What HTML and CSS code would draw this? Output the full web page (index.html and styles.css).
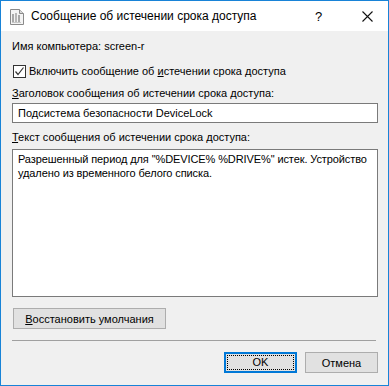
FILE: index.html
```html
<!DOCTYPE html>
<html lang="ru">
<head>
    <meta charset="UTF-8">
    <title>Сообщение об истечении срока доступа</title>
    <link rel="stylesheet" href="styles.css">
</head>
<body>
    <div class="window">
        <div class="titlebar">
            <svg class="app-icon" width="14" height="16" viewBox="0 0 14 16">
                <path d="M0.5 0.5 H9.5 L13.5 4.5 V15.5 H0.5 Z" fill="#f4f4f4" stroke="#8a8a8a"/>
                <path d="M9.5 0.5 V4.5 H13.5" fill="#d8d8d8" stroke="#8a8a8a"/>
                <rect x="2" y="5" width="2" height="8" fill="#a8a8a8"/>
                <rect x="5" y="4" width="2" height="9" fill="#b8b8b8"/>
                <rect x="8" y="6" width="2" height="7" fill="#a8a8a8"/>
                <rect x="2" y="13" width="9" height="1" fill="#c8c8c8"/>
            </svg>
            <span class="title">Сообщение об истечении срока доступа</span>
            <span class="help">?</span>
            <svg class="close" width="11" height="11" viewBox="0 0 11 11">
                <path d="M0.5 0.5 L10.5 10.5 M10.5 0.5 L0.5 10.5" stroke="#111" stroke-width="1.1"/>
            </svg>
        </div>
        <div class="content">
            <div class="line">Имя компьютера: screen-r</div>
            <label class="check-row">
                <span class="checkbox">
                    <svg width="11" height="11" viewBox="0 0 11 11">
                        <path d="M1.5 5.5 L4 8.5 L9.5 1.5" fill="none" stroke="#333" stroke-width="1.2"/>
                    </svg>
                </span>
                <span>Включить сообщение об <u>и</u>стечении срока доступа</span>
            </label>
            <div class="line label"><u>З</u>аголовок сообщения об истечении срока доступа:</div>
            <div class="field">Подсистема безопасности DeviceLock</div>
            <div class="line label"><u>Т</u>екст сообщения об истечении срока доступа:</div>
            <div class="memo">Разрешенный период для "%DEVICE% %DRIVE%" истек. Устройство удалено из временного белого списка.</div>
            <div class="restore-row">
                <button class="btn restore"><u>В</u>осстановить умолчания</button>
            </div>
            <div class="separator"></div>
            <div class="actions">
                <button class="btn default"><span class="focus">OK</span></button>
                <button class="btn">Отмена</button>
            </div>
        </div>
    </div>
</body>
</html>
```

FILE: styles.css
```css
body {
    margin: 0;
    font-family: "Liberation Sans", Arial, sans-serif;
    font-size: 11px;
    color: #000;
}

.window {
    width: 387px;
    height: 384px;
    border: 1px solid #1883d7;
    background: #f0f0f0;
    display: flex;
    flex-direction: column;
}

.titlebar {
    height: 30px;
    background: #fff;
    display: flex;
    align-items: center;
    padding-left: 9px;
}

.app-icon {
    margin-top: 1px;
}

.title {
    margin-left: 7px;
    font-size: 12px;
    flex: 1;
}

.help {
    width: 14px;
    margin-right: 33px;
    font-size: 13px;
}

.close {
    margin-right: 15px;
}

.content {
    padding: 7px 10px 0 11px;
    display: flex;
    flex-direction: column;
}

.line {
    height: 16px;
    line-height: 16px;
    white-space: nowrap;
}

.check-row {
    display: flex;
    align-items: center;
    gap: 3px;
    margin-top: 9px;
    margin-left: 1px;
    height: 16px;
}

.checkbox {
    width: 11px;
    height: 11px;
    border: 1px solid #333;
    background: #fff;
    display: flex;
}

.label {
    margin-top: 6px;
}

.field {
    margin-top: 2px;
    height: 18px;
    line-height: 18px;
    border: 1px solid #7a7a7a;
    background: #fff;
    padding-left: 5px;
}

.memo {
    margin-top: 4px;
    height: 139px;
    border: 1px solid #7a7a7a;
    background: #fff;
    padding: 2px 0 5px 5px;
    line-height: 14px;
    letter-spacing: -0.1px;
}

.restore-row {
    margin-top: 11px;
    display: flex;
}

.btn {
    box-sizing: border-box;
    font-family: inherit;
    font-size: 11px;
    color: #000;
    background: #e1e1e1;
    border: 1px solid #adadad;
    height: 21px;
    width: 73px;
    padding: 0;
    margin: 0;
    white-space: nowrap;
}

.restore {
    width: 153px;
    margin-left: 1px;
}

.separator {
    margin-top: 11px;
    height: 1px;
    width: 364px;
    background: #a0a0a0;
}

.actions {
    margin-top: 11px;
    display: flex;
    justify-content: flex-end;
    gap: 8px;
}

.default {
    border: 2px solid #0078d7;
    padding: 1px;
}

.focus {
    display: block;
    height: 15px;
    line-height: 15px;
    outline: 1px dotted #000;
    outline-offset: -1px;
}
```
